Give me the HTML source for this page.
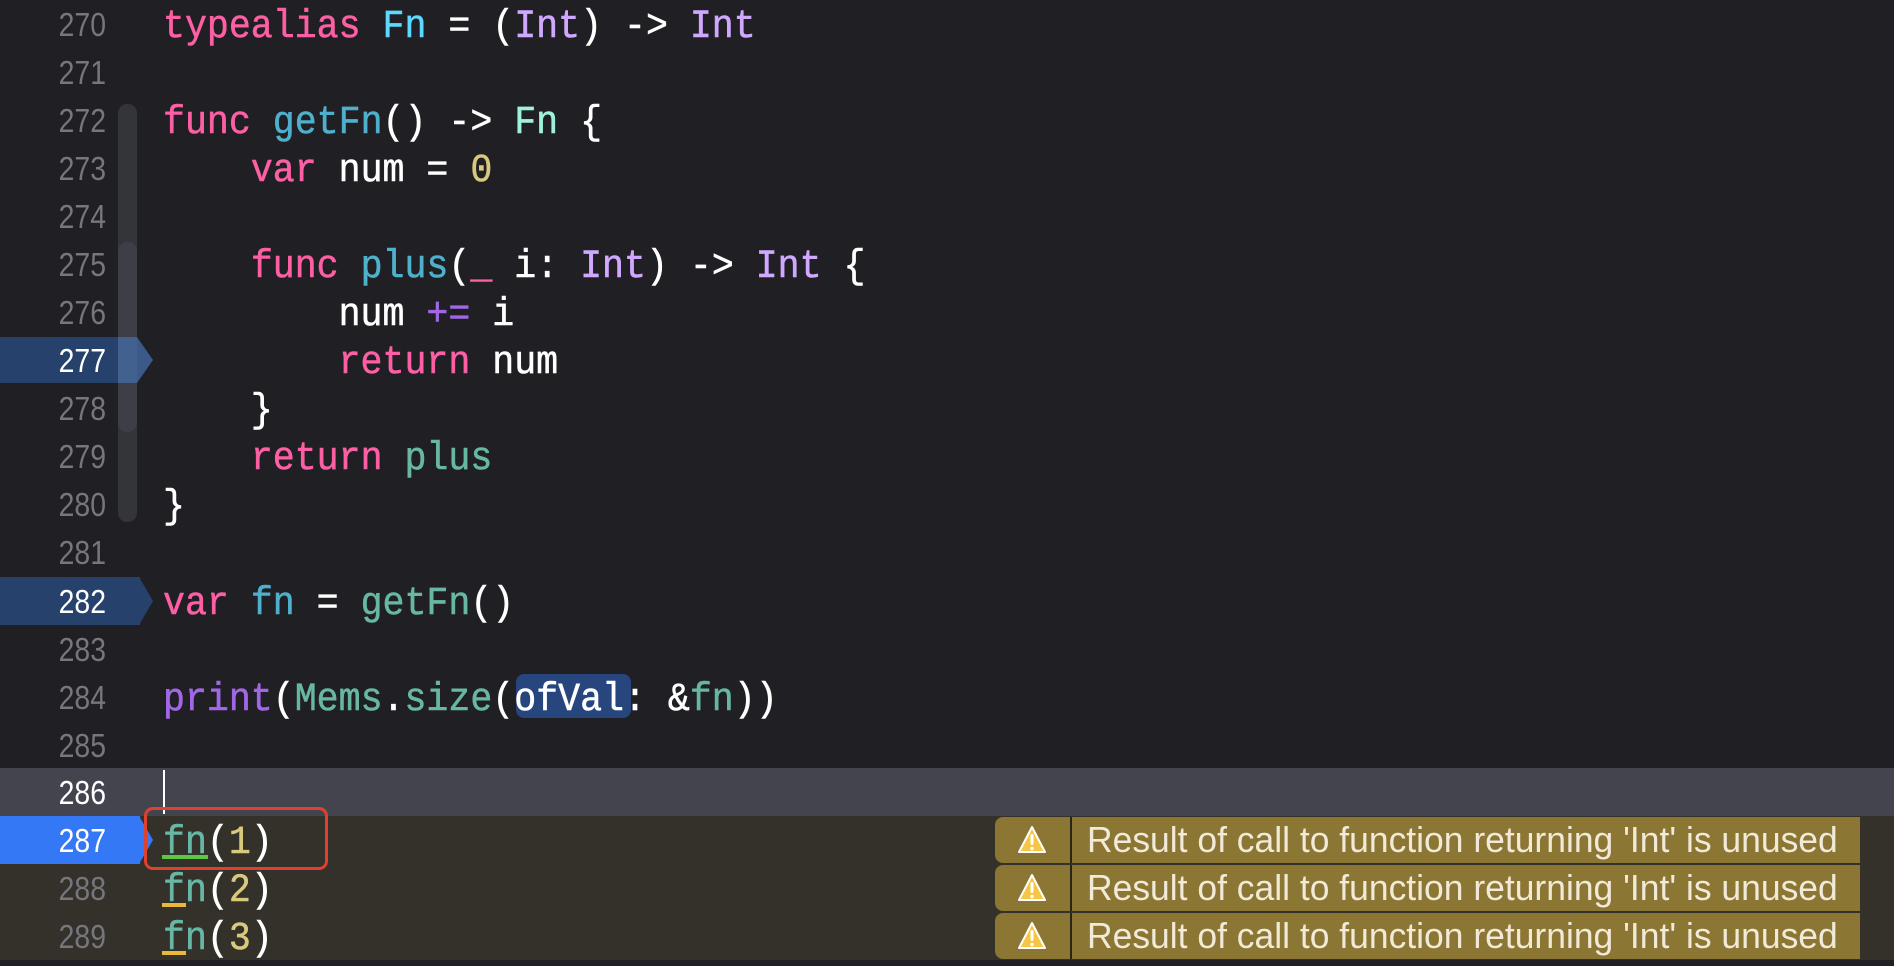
<!DOCTYPE html>
<html><head><meta charset="utf-8"><style>
html,body{margin:0;padding:0;width:1894px;height:966px;overflow:hidden;background:#1f1f24}
.l{position:absolute;left:0;width:1894px;height:48px;}
.n{position:absolute;left:0;top:1px;width:106px;text-align:right;font:33px/48px "Liberation Sans",sans-serif;color:#76767c;transform:scaleX(.86);transform-origin:right}
.n.w{color:#fff}
.c{position:absolute;left:163px;top:3px;font:36.6px/48px "Liberation Mono",monospace;color:#fff;white-space:pre;transform:scaleY(1.1);transform-origin:center;-webkit-text-stroke:0.5px currentColor}
.k{color:#fc5fa3}.t{color:#d0a8ff}.b{color:#5dd8ff}.d{color:#4eb0cc}.g{color:#67b7a4}.y{color:#d9c97c}.p{color:#a167e6}.tl{color:#9ef1dd}
.warn{position:absolute;left:995px;width:865px;height:46px;background:#8b7633;border-radius:8px 0 0 8px}
.warn .s{position:absolute;left:75px;top:0;width:2px;height:46px;background:#2a2718}
.warn .tx{position:absolute;left:92px;top:0;font:36px/46px "Liberation Sans",sans-serif;color:#f2ead8;white-space:nowrap;transform:scaleX(.985);transform-origin:left}
</style></head><body>
<div style="position:absolute;left:118px;top:104px;width:19px;height:418px;background:#34343b;border-radius:9px"></div>
<div style="position:absolute;left:118px;top:242px;width:19px;height:190px;background:#3e3e46;border-radius:9px"></div>
<div style="position:absolute;left:0;top:337px;width:118px;height:46px;background:#26416c"></div>
<svg style="position:absolute;left:118px;top:337px" width="36" height="46"><path d="M0 0H19L35 23L19 46H0Z" fill="#3b5a8a"/><rect x="0" y="0" width="19" height="46" fill="#42618f"/></svg>
<div style="position:absolute;left:0;top:577px;width:140px;height:48px;background:#26416c"></div>
<svg style="position:absolute;left:139px;top:577px" width="16" height="48"><path d="M0 0L14 24L0 48Z" fill="#26416c"/></svg>
<div style="position:absolute;left:0;top:768px;width:1894px;height:48px;background:#44444f"></div>
<div style="position:absolute;left:0;top:816px;width:1894px;height:144px;background:#34302a"></div>
<div style="position:absolute;left:0;top:816px;width:140px;height:48px;background:#3478f6"></div>
<svg style="position:absolute;left:139px;top:816px" width="16" height="48"><path d="M0 0L14 24L0 48Z" fill="#3478f6"/></svg>
<div style="position:absolute;left:163px;top:770px;width:2px;height:44px;background:#fff"></div>

<div class="l" style="top:0px"><div class="n">270</div><div class="c"><span class="k">typealias</span> <span class="b">Fn</span> = (<span class="t">Int</span>) -&gt; <span class="t">Int</span></div></div>
<div class="l" style="top:48px"><div class="n">271</div></div>
<div class="l" style="top:96px"><div class="n">272</div><div class="c"><span class="k">func</span> <span class="d">getFn</span>() -&gt; <span class="tl">Fn</span> {</div></div>
<div class="l" style="top:144px"><div class="n">273</div><div class="c">    <span class="k">var</span> num = <span class="y">0</span></div></div>
<div class="l" style="top:192px"><div class="n">274</div></div>
<div class="l" style="top:240px"><div class="n">275</div><div class="c">    <span class="k">func</span> <span class="d">plus</span>(<span class="k">_</span> i: <span class="t">Int</span>) -&gt; <span class="t">Int</span> {</div></div>
<div class="l" style="top:288px"><div class="n">276</div><div class="c">        num <span class="p">+=</span> i</div></div>
<div class="l" style="top:336px"><div class="n w">277</div><div class="c">        <span class="k">return</span> num</div></div>
<div class="l" style="top:384px"><div class="n">278</div><div class="c">    }</div></div>
<div class="l" style="top:432px"><div class="n">279</div><div class="c">    <span class="k">return</span> <span class="g">plus</span></div></div>
<div class="l" style="top:480px"><div class="n">280</div><div class="c">}</div></div>
<div class="l" style="top:528px"><div class="n">281</div></div>
<div class="l" style="top:577px"><div class="n w">282</div><div class="c"><span class="k">var</span> <span class="d">fn</span> = <span class="g">getFn</span>()</div></div>
<div class="l" style="top:625px"><div class="n">283</div></div>
<div style="position:absolute;left:516px;top:674px;width:115px;height:44px;background:#26467d;border-radius:8px"></div>
<div class="l" style="top:673px"><div class="n">284</div><div class="c"><span class="p">print</span>(<span class="g">Mems</span>.<span class="g">size</span>(ofVal: &amp;<span class="g">fn</span>))</div></div>
<div class="l" style="top:721px"><div class="n">285</div></div>
<div class="l" style="top:768px"><div class="n w">286</div></div>
<div class="l" style="top:816px"><div class="n w">287</div><div class="c"><span class="g">fn</span>(<span class="y">1</span>)</div></div>
<div class="l" style="top:864px"><div class="n">288</div><div class="c"><span class="g">fn</span>(<span class="y">2</span>)</div></div>
<div class="l" style="top:912px"><div class="n">289</div><div class="c"><span class="g">fn</span>(<span class="y">3</span>)</div></div>
<div style="position:absolute;left:162px;top:855px;width:46px;height:4px;background:#5ec640"></div>
<div style="position:absolute;left:162px;top:903px;width:24px;height:4px;background:#e8b838"></div>
<div style="position:absolute;left:162px;top:951px;width:24px;height:4px;background:#e8b838"></div>
<div style="position:absolute;left:144px;top:807px;width:178px;height:57px;border:3.5px solid #e0412f;border-radius:9px"></div>

<svg width="0" height="0" style="position:absolute"><defs><symbol id="w" viewBox="0 0 30 30"><path d="M15 2L28 27H2Z" fill="#f5c544" stroke="#fff" stroke-width="2" stroke-linejoin="round"/><rect x="13.5" y="9" width="3" height="11" rx="1.5" fill="#fff"/><circle cx="15" cy="23.5" r="1.8" fill="#fff"/></symbol></defs></svg>
<div class="warn" style="top:817px"><svg style="position:absolute;left:22px;top:8px" width="30" height="30"><use href="#w"/></svg><div class="s"></div><div class="tx">Result of call to function returning 'Int' is unused</div></div>
<div class="warn" style="top:865px"><svg style="position:absolute;left:22px;top:8px" width="30" height="30"><use href="#w"/></svg><div class="s"></div><div class="tx">Result of call to function returning 'Int' is unused</div></div>
<div class="warn" style="top:913px"><svg style="position:absolute;left:22px;top:8px" width="30" height="30"><use href="#w"/></svg><div class="s"></div><div class="tx">Result of call to function returning 'Int' is unused</div></div>
</body></html>
